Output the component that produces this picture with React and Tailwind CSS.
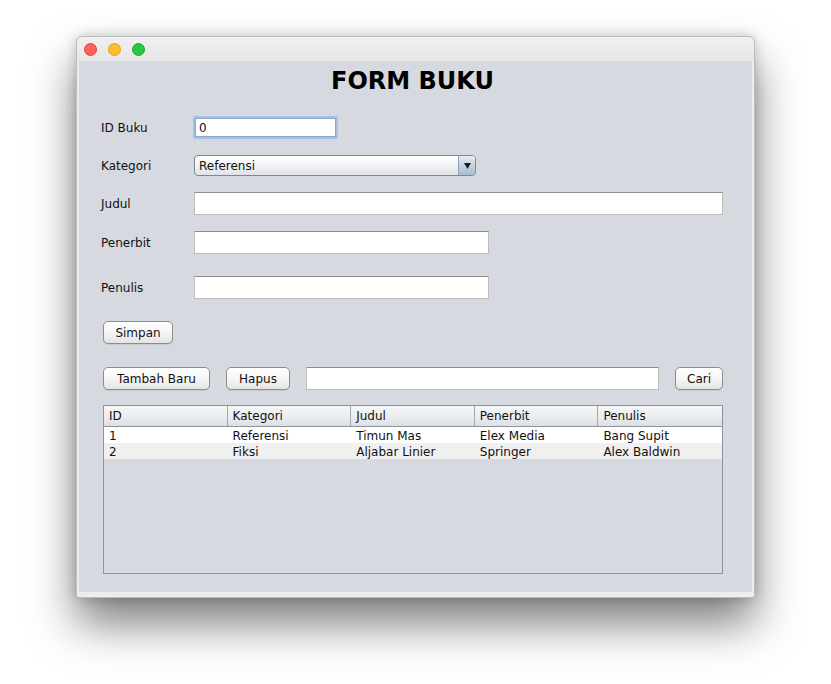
import React from "react";

const font = { fontFamily: '"DejaVu Sans", "Noto Sans", sans-serif' };

function Btn({ w, children }) {
  return (
    <div
      className={`${w} h-[23px] flex items-center justify-center rounded-[5px] border border-[#8c8c8c] bg-gradient-to-b from-[#ffffff] via-[#f6f6f6] to-[#e4e4e4] text-[12px] text-[#111] shadow-[0_1px_0_rgba(0,0,0,0.08)]`}
    >
      {children}
    </div>
  );
}

function Field({ w }) {
  return (
    <div className={`${w} h-[23px] bg-white border border-[#bcbcbc] border-t-[#8e8e8e]`} />
  );
}

function Label({ children }) {
  return <div className="w-[93px] text-[12px] text-[#111]">{children}</div>;
}

const cols = ["ID", "Kategori", "Judul", "Penerbit", "Penulis"];
const rows = [
  ["1", "Referensi", "Timun Mas", "Elex Media", "Bang Supit"],
  ["2", "Fiksi", "Aljabar Linier", "Springer", "Alex Baldwin"],
];

export default function App() {
  return (
    <div className="w-[831px] h-[684px] bg-white pt-[36px] pl-[76px]" style={font}>
      <div className="w-[679px] flex flex-col rounded-t-[6px] rounded-b-[3px] border border-[#bdbdbd] bg-[#ededed] shadow-[0_26px_45px_rgba(0,0,0,0.5),0_0_12px_rgba(0,0,0,0.2)]">
        {/* title bar */}
        <div className="h-[24px] flex items-center gap-[11px] pl-[7px] rounded-t-[6px] bg-gradient-to-b from-[#f0f0f0] to-[#e6e6e6]">
          <div className="w-[13px] h-[13px] rounded-full bg-[#fe5f57] border border-[#e2463f]" />
          <div className="w-[13px] h-[13px] rounded-full bg-[#febc2e] border border-[#e1a116]" />
          <div className="w-[13px] h-[13px] rounded-full bg-[#28c840] border border-[#14ae2c]" />
        </div>
        {/* content */}
        <div className="mx-[2px] h-[531px] bg-[#d6d9df] flex flex-col">
          <div className="h-[40px] flex items-center justify-center pr-[6px] text-[24px] font-bold text-black">
            FORM BUKU
          </div>

          {/* ID Buku */}
          <div className="mt-[15px] flex items-center pl-[22px] h-[23px]">
            <Label>ID Buku</Label>
            <div className="-ml-[1px] w-[145px] h-[23px] rounded-[2px] border-2 border-[#a6c1e2] bg-white">
              <div className="w-full h-full border border-[#8ea6c4] flex items-center pl-[3px] text-[12px] text-[#111]">
                0
              </div>
            </div>
          </div>

          {/* Kategori */}
          <div className="mt-[16px] flex items-center pl-[22px] h-[21px]">
            <Label>Kategori</Label>
            <div className="w-[282px] h-[21px] flex rounded-[4px] border border-[#7d8796] bg-gradient-to-b from-[#ffffff] via-[#f3f4f6] to-[#e0e2e7] overflow-hidden">
              <div className="flex-1 flex items-center pl-[4px] text-[12px] text-[#111]">Referensi</div>
              <div className="w-[17px] flex items-center justify-center border-l border-[#8f9cb0] bg-gradient-to-b from-[#e4ebf3] to-[#a9bdd2]">
                <svg width="7" height="6" viewBox="0 0 7 6">
                  <polygon points="0,0 7,0 3.5,6" fill="#1e1e1e" />
                </svg>
              </div>
            </div>
          </div>

          {/* Judul */}
          <div className="mt-[16px] flex items-center pl-[22px] h-[23px]">
            <Label>Judul</Label>
            <Field w="w-[529px]" />
          </div>

          {/* Penerbit */}
          <div className="mt-[16px] flex items-center pl-[22px] h-[23px]">
            <Label>Penerbit</Label>
            <Field w="w-[295px]" />
          </div>

          {/* Penulis */}
          <div className="mt-[22px] flex items-center pl-[22px] h-[23px]">
            <Label>Penulis</Label>
            <Field w="w-[295px]" />
          </div>

          {/* Simpan */}
          <div className="mt-[22px] pl-[24px] flex">
            <Btn w="w-[70px]">Simpan</Btn>
          </div>

          {/* action row */}
          <div className="mt-[23px] pl-[24px] flex items-center h-[23px]">
            <Btn w="w-[107px]">Tambah Baru</Btn>
            <div className="ml-[16px]">
              <Btn w="w-[64px]">Hapus</Btn>
            </div>
            <div className="ml-[16px]">
              <Field w="w-[353px]" />
            </div>
            <div className="ml-[16px]">
              <Btn w="w-[48px]">Cari</Btn>
            </div>
          </div>

          {/* table */}
          <div className="mt-[15px] ml-[24px] w-[620px] h-[169px] border border-[#8e939b] bg-[#d6d9df] flex flex-col">
            <div className="h-[21px] flex border-b border-[#8e939b] bg-gradient-to-b from-[#f6f6f7] via-[#eceef0] to-[#dcdfe4]">
              {cols.map((c, i) => (
                <div
                  key={c}
                  className={`w-[124px] flex items-center pl-[5px] text-[12px] text-[#111] ${i < 4 ? "border-r border-[#a4a7ad]" : ""}`}
                >
                  {c}
                </div>
              ))}
            </div>
            {rows.map((r, ri) => (
              <div key={ri} className={`h-[16px] flex ${ri === 0 ? "bg-white" : "bg-[#f0f0f1]"}`}>
                {r.map((v, ci) => (
                  <div key={ci} className="w-[124px] flex items-center pl-[5px] pt-[1px] text-[12px] text-[#111] leading-none">
                    {v}
                  </div>
                ))}
              </div>
            ))}
          </div>
        </div>
        <div className="h-[5px]" />
      </div>
    </div>
  );
}
